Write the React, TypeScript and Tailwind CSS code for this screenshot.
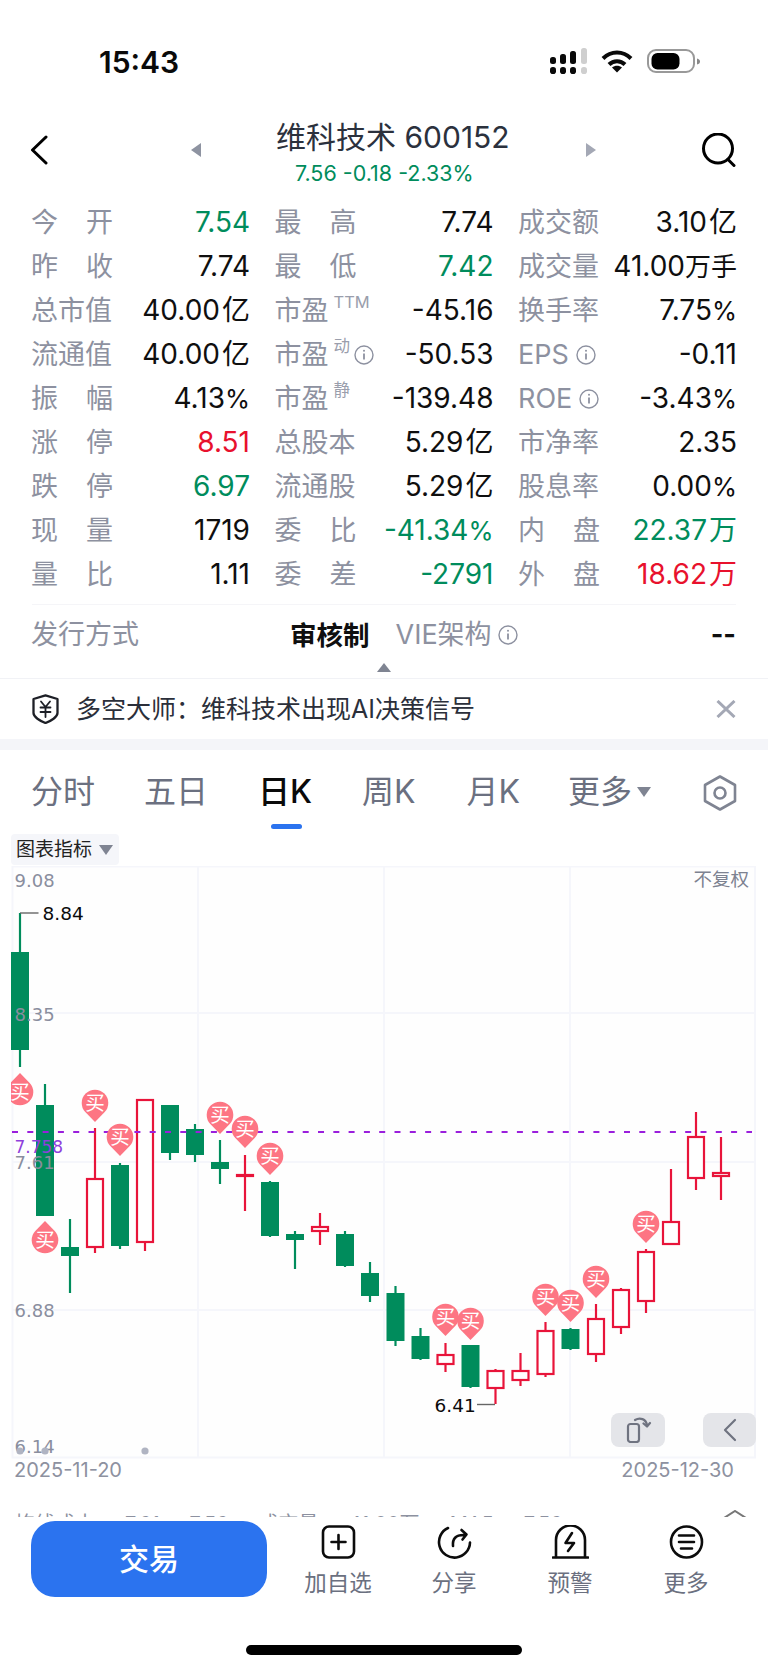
import React from "react";

const GREEN = "#008c5c";
const RED = "#e8143a";

const Info = ({ className = "" }: { className?: string }) => (
  <svg viewBox="0 0 20 20" className={`h-[20px] w-[20px] ${className}`} fill="none" stroke="#8d91a0" strokeWidth="1.4">
    <circle cx="10" cy="10" r="9" />
    <path d="M10 8.5v6" strokeWidth="1.8" />
    <circle cx="10" cy="5.8" r="1" fill="#8d91a0" stroke="none" />
  </svg>
);

type Cell = { l: React.ReactNode; v: string; c?: string };

const Two = ({ a, b }: { a: string; b: string }) => (
  <span className="flex w-[82px] justify-between"><span>{a}</span><span>{b}</span></span>
);
const Sup = ({ t, info }: { t: string; info?: boolean }) => (
  <span className="flex items-center">
    <span>市盈</span>
    <span className="mb-[17px] ml-[5px] text-[16.5px] leading-none text-[#9a9eac]">{t}</span>
    {info ? <Info className="ml-[4px]" /> : null}
  </span>
);
const Tag = ({ t, gap }: { t: string; gap: string }) => (
  <span className="flex items-center">
    <span>{t}</span>
    <Info className={gap} />
  </span>
);

const Val = ({ v }: { v: string }) => (
  <>
    {v.split(/([\u4e00-\u9fff%]+)/).map((part, i) => {
      if (i % 2 === 0) return <span key={i} className="text-[28px]">{part}</span>;
      if (part === "%") return <span key={i} className="text-[25.5px]">{part}</span>;
      if (part.length === 1) return <span key={i} className="ml-[2px] text-[28px]">{part}</span>;
      return <span key={i} className="text-[26px]">{part}</span>;
    })}
  </>
);

const cg = "text-[#008c5c]";
const cr = "text-[#e8112d]";

const rows: Cell[][] = [
  [{ l: <Two a="今" b="开" />, v: "7.54", c: cg }, { l: <Two a="最" b="高" />, v: "7.74" }, { l: "成交额", v: "3.10亿" }],
  [{ l: <Two a="昨" b="收" />, v: "7.74" }, { l: <Two a="最" b="低" />, v: "7.42", c: cg }, { l: "成交量", v: "41.00万手" }],
  [{ l: "总市值", v: "40.00亿" }, { l: <Sup t="TTM" />, v: "-45.16" }, { l: "换手率", v: "7.75%" }],
  [{ l: "流通值", v: "40.00亿" }, { l: <Sup t="动" info />, v: "-50.53" }, { l: <Tag t="EPS" gap="ml-[7px]" />, v: "-0.11" }],
  [{ l: <Two a="振" b="幅" />, v: "4.13%" }, { l: <Sup t="静" />, v: "-139.48" }, { l: <Tag t="ROE" gap="ml-[7px]" />, v: "-3.43%" }],
  [{ l: <Two a="涨" b="停" />, v: "8.51", c: cr }, { l: "总股本", v: "5.29亿" }, { l: "市净率", v: "2.35" }],
  [{ l: <Two a="跌" b="停" />, v: "6.97", c: cg }, { l: "流通股", v: "5.29亿" }, { l: "股息率", v: "0.00%" }],
  [{ l: <Two a="现" b="量" />, v: "1719" }, { l: <Two a="委" b="比" />, v: "-41.34%", c: cg }, { l: <Two a="内" b="盘" />, v: "22.37万", c: cg }],
  [{ l: <Two a="量" b="比" />, v: "1.11" }, { l: <Two a="委" b="差" />, v: "-2791", c: cg }, { l: <Two a="外" b="盘" />, v: "18.62万", c: cr }],
];

// x, bodyTop, bodyBottom, wickTop, wickBottom, colour (g filled / r hollow)
const candles: [number, number, number, number, number, "g" | "r"][] = [
  [20, 952, 1050, 913, 1067, "g"],
  [45, 1105, 1216, 1084, 1216, "g"],
  [70, 1247, 1256, 1219, 1293, "g"],
  [95, 1178, 1248, 1128, 1253, "r"],
  [120, 1165, 1246, 1163, 1249, "g"],
  [145, 1099, 1243, 1099, 1251, "r"],
  [170, 1105, 1153, 1105, 1160, "g"],
  [195, 1129, 1155, 1124, 1162, "g"],
  [220, 1162, 1169, 1140, 1184, "g"],
  [245, 1174, 1177, 1155, 1211, "r"],
  [270, 1182, 1236, 1181, 1237, "g"],
  [295, 1234, 1240, 1231, 1269, "g"],
  [320, 1226, 1232, 1213, 1245, "r"],
  [345, 1234, 1266, 1231, 1267, "g"],
  [370, 1273, 1296, 1262, 1302, "g"],
  [395.5, 1293, 1341, 1286, 1346, "g"],
  [420.5, 1336, 1359, 1328, 1360, "g"],
  [445.5, 1354, 1365, 1343, 1372, "r"],
  [470.5, 1345, 1387, 1345, 1388, "g"],
  [495.5, 1370, 1389, 1369, 1404, "r"],
  [520.5, 1370, 1381, 1353, 1386, "r"],
  [545.5, 1330, 1375, 1322, 1377, "r"],
  [570.5, 1329, 1349, 1328, 1350, "g"],
  [596, 1318, 1355, 1304, 1362, "r"],
  [621, 1289, 1328, 1288, 1334, "r"],
  [646, 1251, 1302, 1249, 1313, "r"],
  [671, 1221, 1245, 1169, 1245, "r"],
  [696, 1136, 1179, 1112, 1190, "r"],
  [721, 1172, 1177, 1137, 1200, "r"],
];

// cx, circle centre y, points up?
const marks: [number, number, boolean][] = [
  [20, 1092, true],
  [45, 1240, true],
  [95, 1103, false],
  [120, 1137, false],
  [220, 1115, false],
  [245, 1129, false],
  [270, 1156, false],
  [445.5, 1317, false],
  [470.5, 1321, false],
  [545.5, 1297, false],
  [570.5, 1303, false],
  [596, 1279, false],
  [646, 1224, false],
];

const Axis = ({ y, t, fill = "#8a8e9e", size = 18 }: { y: number; t: string; fill?: string; size?: number }) => (
  <text x="14.5" y={y + 6.5} fontSize={size} fill={fill} className="font-['DejaVu_Sans',sans-serif]">{t}</text>
);

const Chart = () => (
  <svg viewBox="0 866 768 593" className="block h-[593px] w-[768px]">
    <defs>
      <clipPath id="plot"><rect x="11" y="866" width="757" height="593" /></clipPath>
    </defs>
    <rect x="12.5" y="866.5" width="742.5" height="591" fill="#fefefe" stroke="#f5f6fb" strokeWidth="2" />
    {[198, 384, 570].map((x) => (
      <line key={x} x1={x} x2={x} y1="866" y2="1458" stroke="#f5f6fb" strokeWidth="2" />
    ))}
    {[1013, 1162, 1310].map((y) => (
      <line key={y} x1="12" x2="755" y1={y} y2={y} stroke="#f5f6fb" strokeWidth="2" />
    ))}
    <g clipPath="url(#plot)">
      {candles.map(([x, bt, bb, wt, wb, k]) => {
        const col = k === "g" ? GREEN : RED;
        return (
          <g key={x}>
            <line x1={x} x2={x} y1={wt} y2={wb} stroke={col} strokeWidth="2.2" />
            {k === "g" ? (
              <rect x={x - 9} y={bt} width="18" height={bb - bt} fill={col} />
            ) : (
              <rect x={x - 8} y={bt + 1} width="16" height={Math.max(bb - bt - 2, 1)} fill="#fff" stroke={col} strokeWidth="2.2" />
            )}
          </g>
        );
      })}
      <line x1="12" x2="752" y1="1132" y2="1132" stroke="#9a1fdc" strokeWidth="2" strokeDasharray="6 9.3" />
      {marks.map(([x, y, up]) => (
        <g key={x}>
          <path
            d={`M${x - 9.7} ${y + 9.1}A13.3 13.3 0 1 1 ${x + 9.7} ${y + 9.1}L${x} ${y + 19}Z`}
            fill="#fd7583"
            strokeLinejoin="round"
            transform={up ? `rotate(180 ${x} ${y})` : undefined}
          />
          <text x={x} y={y + 7} fontSize="19.5" fill="#fff" textAnchor="middle">买</text>
        </g>
      ))}
    </g>
    <Axis y={880} t="9.08" />
    <Axis y={1014} t="8.35" />
    <Axis y={1146} t="7.758" fill="#8f3fdc" size={17} />
    <Axis y={1162} t="7.61" />
    <Axis y={1310} t="6.88" />
    <Axis y={1446} t="6.14" />
    {[20, 45, 145].map((x) => (
      <circle key={x} cx={x} cy="1451" r="3.6" fill="#b0b4c2" />
    ))}
    <path d="M20 913H38.5" stroke="#666" strokeWidth="1.4" fill="none" />
    <text x="42.5" y="920" fontSize="18.5" fill="#0b0b0b" className="font-['DejaVu_Sans',sans-serif]">8.84</text>
    <path d="M477 1404.5H495" stroke="#666" strokeWidth="1.4" fill="none" />
    <text x="434.5" y="1411.5" fontSize="18.5" fill="#0b0b0b" className="font-['DejaVu_Sans',sans-serif]">6.41</text>
    <text x="749" y="886" fontSize="18.5" fill="#7d8291" textAnchor="end">不复权</text>
  </svg>
);

const tabs = ["分时", "五日", "日K", "周K", "月K", "更多"];

const ToolIcon = ({ children }: { children: React.ReactNode }) => (
  <svg viewBox="0 0 37 34" className="h-[34px] w-[37px]" fill="none" stroke="#0c0c0c" strokeWidth="2.6" strokeLinecap="round" strokeLinejoin="round">
    {children}
  </svg>
);

const tools: [string, React.ReactNode][] = [
  ["加自选", <><rect x="3" y="1.5" width="31" height="31" rx="6" /><path d="M18.5 10v14M11.5 17h14" /></>],
  ["分享", <><path d="M12 3A15.5 15.5 0 1 0 34 17.5" /><path d="M17 21Q16 10 27.5 10M25.5 5l5 4.5-4 5" /></>],
  ["预警", <><path d="M4 32V15A14.5 14.5 0 0 1 33 15V32" /><path d="M1 32.5H36" /><path d="M20 8 13.5 18H22L16 26" /></>],
  ["更多", <><circle cx="18.5" cy="17" r="15.5" /><path d="M11 10.5H26M11 17H26M13 23.5H24" /></>],
];

export default function App() {
  return (
    <div className="relative h-[1670px] w-[768px] overflow-hidden bg-white font-[Inter,'Noto_Sans_CJK_SC',sans-serif]">
      {/* status bar */}
      <div className="flex h-[100px] items-start">
        <span className="ml-[99px] mt-[42px] text-[30px] font-semibold leading-[40px] text-[#0a0a0a]">15:43</span>
        <svg viewBox="0 0 38 27" className="ml-[370px] mt-[48px] h-[27px] w-[38px]">
          <g fill="#0a0a0a">
            <rect x="1" y="9" width="6" height="7" rx="2.5" />
            <rect x="11" y="6" width="6" height="10" rx="2.5" />
            <rect x="21" y="3" width="6" height="13" rx="2.5" />
            <rect x="1" y="19" width="6" height="7" rx="2.8" />
            <rect x="11" y="19" width="6" height="7" rx="2.8" />
            <rect x="21" y="19" width="6" height="7" rx="2.8" />
          </g>
          <g fill="#cfcfcf">
            <rect x="32" y="0" width="6" height="16" rx="2.5" />
            <rect x="32" y="19" width="6" height="7" rx="2.8" />
          </g>
        </svg>
        <svg viewBox="0 0 32 24" className="ml-[14px] mt-[49px] h-[24px] w-[32px]" fill="none" stroke="#0a0a0a" strokeWidth="4">
          <path d="M2 9.5C10 1.5 22 1.5 30 9.5" />
          <path d="M8 15.5C12.5 11 19.5 11 24 15.5" />
          <path d="M16 23.5 11 18.5C14 16 18 16 21 18.5Z" fill="#0a0a0a" stroke="none" />
        </svg>
        <svg viewBox="0 0 54 24" className="ml-[14px] mt-[49px] h-[24px] w-[54px]">
          <rect x="1" y="1" width="46" height="22" rx="8" fill="none" stroke="#999" strokeWidth="2" />
          <rect x="4.5" y="4" width="28" height="16.5" rx="6" fill="#000" />
          <path d="M50 9.5C52 10 53 11 53 12.5S52 15 50 15.5Z" fill="#888" />
        </svg>
      </div>

      {/* header */}
      <div className="flex h-[100px] items-start">
        <svg viewBox="0 0 18 30" className="ml-[30px] mt-[35px] h-[30px] w-[18px]" fill="none" stroke="#000" strokeWidth="3" strokeLinecap="round" strokeLinejoin="round">
          <path d="M16 2 2.5 15 16 28" />
        </svg>
        <svg viewBox="0 0 10 14" className="ml-[143px] mt-[43px] h-[14px] w-[10px]"><path d="M10 0V14L0 7Z" fill="#8e93a1" /></svg>
        <div className="ml-[75px] flex w-[234px] flex-col">
          <span className="mt-[18px] whitespace-nowrap text-[30px] leading-[38px] text-[#2b313d]">维科技术 600152</span>
          <span className="ml-[19px] mt-[5px] whitespace-nowrap text-[21.5px] leading-[24px] text-[#008c5c]">7.56 -0.18 -2.33%</span>
        </div>
        <svg viewBox="0 0 10 14" className="ml-[76px] mt-[43px] h-[14px] w-[10px]"><path d="M0 0V14L10 7Z" fill="#a4a8b5" /></svg>
        <svg viewBox="0 0 35 34" className="ml-[105px] mt-[33px] h-[34px] w-[35px]" fill="none" stroke="#000" strokeWidth="3" strokeLinecap="round">
          <circle cx="17" cy="15.5" r="14.5" />
          <path d="M27 26.5 33 32.5" />
        </svg>
      </div>

      {/* quote table */}
      <div className="ml-[31px] flex w-[706px] flex-col">
        {rows.map((row, i) => (
          <div key={i} className="grid h-[44px] grid-cols-[219px_219px_219px] gap-x-[24.5px]">
            {row.map((cell, j) => (
              <div key={j} className="flex items-center justify-between text-[27px] leading-[44px] text-[#8d91a0]">
                <span className="whitespace-nowrap">{cell.l}</span>
                <span className={`whitespace-nowrap ${cell.c ?? "text-[#0f0f0f]"}`}><Val v={cell.v} /></span>
              </div>
            ))}
          </div>
        ))}
      </div>

      {/* listing row */}
      <div className="mx-[32px] mt-[8px] h-px bg-[#f5f5f8]" />
      <div className="relative flex h-[73px] items-start text-[27px] leading-[60px]">
        <span className="ml-[31px] text-[#8d91a0]">发行方式</span>
        <span className="ml-[151px] text-[26.5px] font-semibold text-[#0f0f0f]">审核制</span>
        <span className="ml-[26px] text-[#8d91a0]">VIE架构</span>
        <Info className="ml-[6px] mt-[20px]" />
        <span className="ml-auto mr-[32px] font-bold text-[#0f0f0f]">--</span>
        <svg viewBox="0 0 14 9" className="absolute left-[377px] top-[58px] h-[9px] w-[14px]"><path d="M7 0 14 9H0Z" fill="#7f8492" /></svg>
      </div>
      <div className="h-px bg-[#f1f2f6]" />

      {/* signal banner */}
      <div className="flex h-[60px] items-center">
        <svg viewBox="0 0 27 30" className="ml-[32px] h-[30px] w-[27px]" fill="none" stroke="#1d1f26" strokeWidth="2.3" strokeLinejoin="round" strokeLinecap="round">
          <path d="M13.5 1.3 25.5 5V19C25.5 23 19 27 13.5 29 8 27 1.5 23 1.5 19V5Z" />
          <path d="M9 7.5 13.5 13 18 7.5M8.5 13.5H18.5M8.5 18H18.5M13.5 13V23" strokeWidth="1.8" />
        </svg>
        <span className="ml-[17px] whitespace-nowrap text-[25px] leading-[36px] text-[#2b2f3a]">多空大师：维科技术出现AI决策信号</span>
        <svg viewBox="0 0 20 18" className="ml-auto mr-[32px] h-[18px] w-[20px]" fill="none" stroke="#a4a8b5" strokeWidth="3">
          <path d="M1.5 1 18.5 17M18.5 1 1.5 17" />
        </svg>
      </div>
      <div className="h-[11px] bg-[#f4f5f9]" />

      {/* period tabs */}
      <div className="relative h-[84px]">
        <div className="flex h-[84px] items-start pt-[20px] text-[32px] leading-[44px] text-[#6b7080]">
          <span className="ml-[31px]">{tabs[0]}</span>
          <span className="ml-[49px]">{tabs[1]}</span>
          <span className="relative ml-[50px] font-medium text-[#0a0a0a]">
            {tabs[2]}
            <span className="absolute left-[13px] top-[54px] h-[5px] w-[31px] rounded-full bg-[#2b73ef]" />
          </span>
          <span className="ml-[50px]">{tabs[3]}</span>
          <span className="ml-[51px]">{tabs[4]}</span>
          <span className="ml-[48px]">{tabs[5]}</span>
          <svg viewBox="0 0 14 10" className="ml-[5px] mt-[17px] h-[10px] w-[14px]"><path d="M0 0H14L7 10Z" fill="#7f8492" /></svg>
          <svg viewBox="0 0 34 36" className="ml-[52px] mt-[5px] h-[36px] w-[34px]" fill="none" stroke="#7f8492" strokeWidth="2.6" strokeLinejoin="round">
            <path d="M17 1.5 32 10V26L17 34.5 2 26V10Z" />
            <circle cx="17" cy="18" r="5.5" />
          </svg>
        </div>
      </div>

      {/* chart */}
      <div className="ml-[11px] flex h-[31px] w-[108px] items-center rounded-[4px] bg-[#f5f6fa] pl-[5px] text-[19px] leading-none text-[#222]">
        <span>图表指标</span>
        <svg viewBox="0 0 14 10" className="ml-[7px] h-[10px] w-[14px]"><path d="M0 0H14L7 10Z" fill="#7f8492" /></svg>
      </div>
      <div className="relative mt-px">
        <Chart />
        <div className="absolute left-[611px] top-[547px] flex h-[34px] w-[54px] items-center justify-center rounded-[8px] bg-[#e4e5e9]">
          <svg viewBox="0 0 28 26" className="h-[26px] w-[28px]" fill="none" stroke="#6f7380" strokeWidth="2.2" strokeLinecap="round" strokeLinejoin="round">
            <rect x="4" y="7" width="11" height="18" rx="2.5" />
            <path d="M11 3C16 0 22 2 23 8M19.5 6.5 23 9.5 26 6" />
          </svg>
        </div>
        <div className="absolute left-[703px] top-[547px] flex h-[34px] w-[53px] items-center justify-center rounded-[8px] bg-[#e4e5e9]">
          <svg viewBox="0 0 14 24" className="h-[24px] w-[14px]" fill="none" stroke="#6f7380" strokeWidth="2.2" strokeLinecap="round" strokeLinejoin="round">
            <path d="M12 2 2 12 12 22" />
          </svg>
        </div>
      </div>

      {/* date axis */}
      <div className="flex h-[51px] items-start justify-between pl-[14px] pr-[34px] text-[20px] leading-[22px] text-[#8d91a0]">
        <span>2025-11-20</span>
        <span>2025-12-30</span>
      </div>

      {/* indicator strip, mostly hidden behind the toolbar */}
      <div className="relative h-[7px] overflow-hidden">
        <div className="flex items-start gap-[30px] pl-[15px] pt-[2px] text-[20px] leading-[24px] text-[#8d91a0]">
          <span>均线成本</span>
          <span>7.61</span>
          <span>7.56</span>
          <span>成交量</span>
          <span>41.00万</span>
          <span>MA5</span>
          <span>7.56</span>
        </div>
        <svg viewBox="0 0 24 8" className="absolute left-[723px] top-0 h-[8px] w-[24px]" fill="none" stroke="#777" strokeWidth="2">
          <path d="M1 8 12 1 23 8" />
        </svg>
      </div>

      {/* toolbar */}
      <div className="flex items-start bg-white pt-[4px]">
        <div className="ml-[31px] flex h-[76px] w-[236px] items-center justify-center rounded-[24px] bg-[#2b73ef] text-[30px] font-medium leading-none text-white">
          交易
        </div>
        <div className="ml-[13px] flex">
          {tools.map(([t, icon]) => (
            <div key={t} className="flex w-[116px] flex-col items-center pt-[4px]">
              <ToolIcon>{icon}</ToolIcon>
              <span className="mt-[9px] text-[22.5px] leading-[30px] text-[#6b7080]">{t}</span>
            </div>
          ))}
        </div>
      </div>
      <div className="ml-[246px] mt-[47px] h-[10px] w-[276px] rounded-full bg-black" />
    </div>
  );
}
